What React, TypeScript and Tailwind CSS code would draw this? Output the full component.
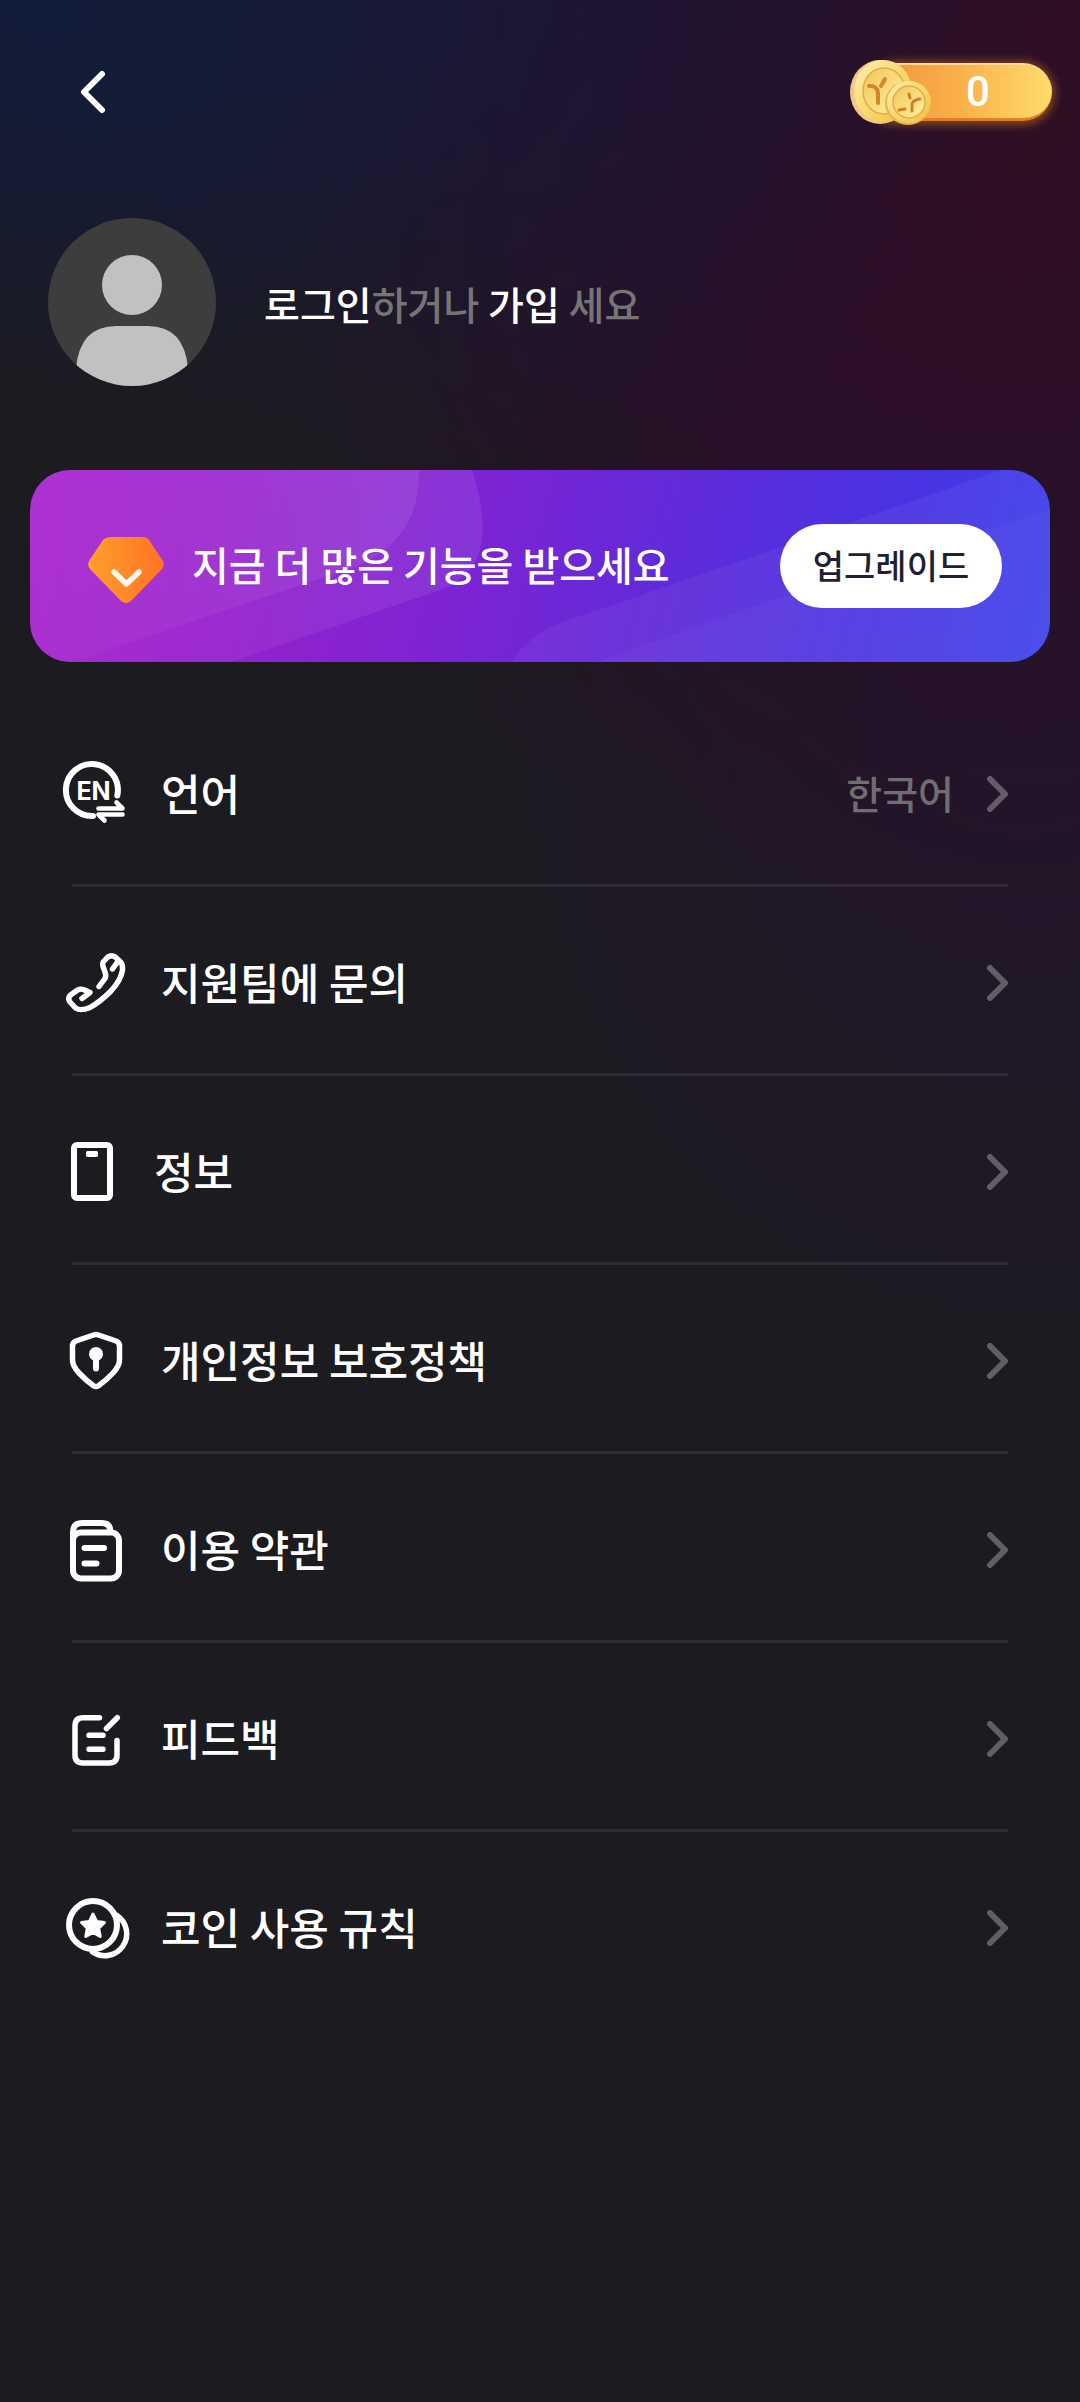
import type { ReactNode } from "react";

type IconProps = { children: ReactNode; narrow?: boolean };

function MenuIcon({ children, narrow }: IconProps) {
  return (
    <svg
      aria-hidden="true"
      viewBox={narrow ? "0 0 65 72" : "0 0 72 72"}
      className={narrow ? "h-18 w-[65px] shrink-0" : "h-18 w-18 shrink-0"}
      fill="none"
      stroke="white"
      strokeWidth="6"
      strokeLinecap="round"
      strokeLinejoin="round"
    >
      {children}
    </svg>
  );
}

const languageIcon = (
  <MenuIcon>
    <path d="M58.3 37.5A26 26 0 1 0 34 58" />
    <path d="M39.5 50.5H63.5L57.5 44.5M63.5 56.5H39.5L45.5 62.5" strokeWidth="4.6" />
    <text
      x="34.5"
      y="41.5"
      textAnchor="middle"
      fill="white"
      stroke="none"
      className="font-[Inter,sans-serif] text-[25px] font-bold"
    >
      EN
    </text>
  </MenuIcon>
);

const phoneIcon = (
  <MenuIcon>
    <path
      strokeWidth="5.4"
      d="M40 39.5L46 31.5Q47.5 29 46 25L43.7 18.5Q43.2 16.5 44.5 14.5L49 9.8Q52.5 7.5 56 9.8L62 15.5Q64 18 63.5 23Q62 33 52 44Q41 55 31 60.5Q22 64.5 16.5 61L10.5 54.5Q8.5 51 11.5 48L19 42.8Q21.5 41.5 25 42.8L31 45.5L23 51.5"
    />
    <path strokeWidth="5.4" d="M53.5 22L59.5 13.5" />
  </MenuIcon>
);

const deviceIcon = (
  <MenuIcon narrow>
    <rect x="15" y="9" width="36" height="53" rx="3" />
    <rect x="27" y="15" width="12" height="6" rx="1.5" fill="white" stroke="none" />
  </MenuIcon>
);

const shieldIcon = (
  <MenuIcon>
    <path
      strokeWidth="5.5"
      d="M34.5 10Q37 9 39.5 10L57 16Q60.5 17.5 60.5 21V35Q60.5 41 54 48Q47 55.5 39.5 60.7Q37 62.3 34.5 60.7Q27 55.5 20 48Q13.5 41 13.5 35V21Q13.5 17.5 17 16Z"
    />
    <circle cx="37" cy="29" r="7" fill="white" stroke="none" />
    <path d="M37 31V43.5" />
  </MenuIcon>
);

const termsIcon = (
  <MenuIcon>
    <rect x="14" y="18.5" width="46" height="46" rx="8" />
    <path d="M14 26V18Q14 9 23 9H43Q51.5 9 51.5 18" />
    <path d="M25.5 34H45M25.5 49.5H37.5" />
  </MenuIcon>
);

const feedbackIcon = (
  <MenuIcon>
    <path strokeWidth="5.5" d="M40.5 14.7H24Q16 14.7 16 23V52Q16 60 24 60H50Q58 60 58 52V37.5" />
    <path strokeWidth="5.5" d="M58.3 14.7L47.5 25.5" />
    <path strokeWidth="5.5" d="M30 32.3H44M30 46.3H44" />
  </MenuIcon>
);

const coinRulesIcon = (
  <MenuIcon>
    <circle cx="34" cy="33" r="24" />
    <path strokeWidth="5.5" d="M58 23.5A21.5 21.5 0 0 1 33.5 60" />
    <path
      fill="white"
      strokeWidth="3"
      d="M34 22L37.5 29.5L45.5 30.5L39.7 36.2L41.2 44.5L34 40.5L26.8 44.5L28.3 36.2L22.5 30.5L30.5 29.5Z"
    />
  </MenuIcon>
);

const menuItems = [
  { label: "언어", icon: languageIcon, value: "한국어" },
  { label: "지원팀에 문의", icon: phoneIcon },
  { label: "정보", icon: deviceIcon },
  { label: "개인정보 보호정책", icon: shieldIcon },
  { label: "이용 약관", icon: termsIcon },
  { label: "피드백", icon: feedbackIcon },
  { label: "코인 사용 규칙", icon: coinRulesIcon },
];

function CoinBadge() {
  return (
    <button
      type="button"
      aria-label="코인 0"
      className="relative flex h-[58px] w-[184px] items-center justify-center rounded-full border-t-2 border-b-3 border-t-[#ffd98f] border-b-[#dd7f22] bg-linear-to-r from-[#f2913a] via-[#f9b04a] to-[#ffdc6c] pl-9 shadow-[0_1px_8px_3px_rgba(240,140,30,0.45)]"
    >
      <svg
        aria-hidden="true"
        viewBox="0 0 84 68"
        className="absolute -top-[7px] -left-[19px] h-17 w-21"
      >
        <defs>
          <linearGradient id="coinRim" x1="0" y1="0" x2="1" y2="1">
            <stop offset="0" stopColor="#fff0b8" />
            <stop offset="0.5" stopColor="#f9d96f" />
            <stop offset="1" stopColor="#efc03a" />
          </linearGradient>
          <linearGradient id="coinFace" x1="0" y1="0" x2="1" y2="1">
            <stop offset="0" stopColor="#f3c75a" />
            <stop offset="1" stopColor="#fff0a0" />
          </linearGradient>
        </defs>
        <ellipse cx="31" cy="34" rx="30" ry="32" fill="#f0c783" />
        <ellipse cx="34" cy="33" rx="29" ry="31" fill="url(#coinRim)" />
        <ellipse cx="35" cy="33" rx="21" ry="23" fill="url(#coinFace)" stroke="#dfae4a" strokeWidth="1.5" />
        <path d="M20 28Q28 27 29 35V45M36 21L32 28" fill="none" stroke="#d9822c" strokeWidth="4" strokeLinecap="round" strokeLinejoin="round" />
        <ellipse cx="59" cy="45" rx="23" ry="22" fill="#e9b455" />
        <ellipse cx="60" cy="44" rx="22" ry="21" fill="url(#coinRim)" />
        <ellipse cx="60" cy="44" rx="16" ry="16" fill="url(#coinFace)" stroke="#dfae4a" strokeWidth="1.5" />
        <path d="M71 41Q64 42 63 46V53M60 36L61 40M50 52L56 51" fill="none" stroke="#cf7f2a" strokeWidth="3" strokeLinecap="round" strokeLinejoin="round" />
      </svg>
      <span className="font-[Roboto,sans-serif] text-[42px] leading-none font-medium text-white">0</span>
    </button>
  );
}

function Avatar() {
  return (
    <svg role="img" aria-label="프로필" viewBox="0 0 168 168" className="size-42 shrink-0 rounded-full bg-[#3d3d3d]">
      <circle cx="84" cy="67" r="30" fill="#c1c1c1" />
      <path d="M28 150Q32 108 68 108H100Q136 108 140 150V168H28Z" fill="#c1c1c1" />
    </svg>
  );
}

function UpgradeBanner() {
  return (
    <section className="relative mx-[30px] mt-21 flex h-48 items-center overflow-hidden rounded-[40px] bg-[linear-gradient(105deg,#ab29cf_0%,#9821cd_20%,#7a24d4_45%,#5f2bda_63%,#4833e2_83%,#3d42ea_100%)] pr-12 pl-[58px]">
      <svg aria-hidden="true" viewBox="0 0 1020 192" preserveAspectRatio="none" className="absolute inset-0 size-full">
        <defs>
          <linearGradient id="sheenLeft" x1="0" y1="0" x2="1" y2="0">
            <stop offset="0" stopColor="white" stopOpacity="0.02" />
            <stop offset="1" stopColor="white" stopOpacity="0.08" />
          </linearGradient>
        </defs>
        <path d="M0 0H389Q391 82 300 105L42 192H0Z" fill="url(#sheenLeft)" />
        <path d="M0 0H442Q474 99 410 120L200 192H0Z" fill="url(#sheenLeft)" />
        <path d="M482 192Q496 167 530 153L751 77L971 0H1020V192Z" fill="white" fillOpacity="0.05" />
        <path d="M570 192Q580 186 593 182L751 127L958 60L1020 39V192Z" fill="white" fillOpacity="0.03" />
      </svg>
      <svg aria-hidden="true" viewBox="0 0 76 66" className="relative mt-2 h-[66px] w-19 shrink-0">
        <defs>
          <linearGradient id="gem" x1="0" y1="0" x2="1" y2="0">
            <stop offset="0" stopColor="#ff9f2b" />
            <stop offset="1" stopColor="#ff7424" />
          </linearGradient>
        </defs>
        <path d="M22 0H55Q59 0 61 3L75 24Q77 28 74 32L43 64Q38 68 33 64L2 32Q-1 28 1 24L15 3Q18 0 22 0Z" fill="url(#gem)" />
        <path d="M26 35L38.5 47L51 35" fill="none" stroke="#fff8f0" strokeWidth="5.5" strokeLinecap="round" strokeLinejoin="round" />
      </svg>
      <p className="relative ml-7 flex-1 pb-1 text-[40px] leading-none font-medium whitespace-nowrap text-white">
        지금 더 많은 기능을 받으세요
      </p>
      <button
        type="button"
        className="relative h-21 w-[222px] shrink-0 rounded-full bg-white pb-0.5 text-[34px] leading-none font-medium whitespace-nowrap text-[#211f33]"
      >
        업그레이드
      </button>
    </section>
  );
}

export default function App() {
  return (
    <main className="min-h-screen bg-[#1c1b1f] bg-[radial-gradient(ellipse_45%_17%_at_4%_0%,#111d3a_0%,transparent_100%),radial-gradient(ellipse_60%_20%_at_38%_0%,#1a1735_0%,transparent_100%),radial-gradient(ellipse_72%_34%_at_94%_5%,#300e24_0%,#290f28_45%,transparent_100%),radial-gradient(ellipse_60%_32%_at_95%_30%,#22152b_0%,transparent_100%)] font-['Noto_Sans_CJK_KR',sans-serif]">
      <header className="flex h-46 items-center justify-between pr-7 pl-16">
        <button type="button" aria-label="뒤로" className="flex size-15 items-center justify-center">
          <svg aria-hidden="true" viewBox="0 0 60 60" className="size-15" fill="none" stroke="white" strokeWidth="6" strokeLinecap="round" strokeLinejoin="round">
            <path d="M38 12L20 30L38 48" />
          </svg>
        </button>
        <CoinBadge />
      </header>

      <section className="mt-[34px] flex items-center gap-12 px-12">
        <Avatar />
        <p className="pt-0.5 text-[39px] leading-none font-medium whitespace-pre text-[#757575]">
          <a href="#login" className="text-white">로그인</a>하거나 <a href="#signup" className="text-white">가입</a> 세요
        </p>
      </section>

      <UpgradeBanner />

      <nav className="mt-9">
        <ul className="mr-18">
          {menuItems.map((item, index) => (
            <li key={item.label}>
              <button type="button" className="flex h-[186px] w-full items-center pt-1.5 pl-[59px] text-left">
                {item.icon}
                <span className="ml-[30px] flex-1 pb-1 text-[43px] leading-none font-medium text-white">{item.label}</span>
                {item.value && <span className="mr-8 pb-1 text-[39px] leading-none font-medium text-[#6f6e70]">{item.value}</span>}
                <svg aria-hidden="true" viewBox="0 0 22 36" className="h-9 w-[22px] shrink-0" fill="none" stroke="white" strokeOpacity="0.3" strokeWidth="6" strokeLinecap="round" strokeLinejoin="round">
                  <path d="M4 3L19 18L4 33" />
                </svg>
              </button>
              {index < menuItems.length - 1 && <hr className="ml-18 border-t-3 border-white/8" />}
            </li>
          ))}
        </ul>
      </nav>
    </main>
  );
}
